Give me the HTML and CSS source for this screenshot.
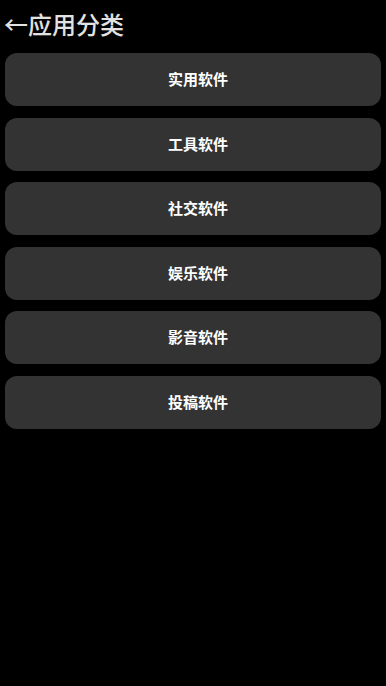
FILE: index.html
```html
<!DOCTYPE html>
<html lang="zh">
<head>
<meta charset="utf-8">
<link rel="stylesheet" href="styles.css">
</head>
<body>
<div class="page">
  <h1 class="title">←应用分类</h1>
  <div class="list">
    <div class="item">实用软件</div>
    <div class="item">工具软件</div>
    <div class="item">社交软件</div>
    <div class="item">娱乐软件</div>
    <div class="item">影音软件</div>
    <div class="item">投稿软件</div>
  </div>
</div>
</body>
</html>
```
FILE: styles.css
```css
html, body {
  margin: 0;
  padding: 0;
  background: #000;
  height: 100%;
}
body {
  font-family: "Noto Sans CJK SC", "Noto Sans", sans-serif;
  color: #fff;
}
.page {
  padding: 0 5px;
}
.title {
  margin: 0 0 0 -1px;
  padding-top: 6px;
  height: 42px;
  box-sizing: border-box;
  font-size: 24px;
  line-height: 36px;
  font-weight: 500;
  color: #e2e2e2;
}
.list {
  display: flex;
  flex-direction: column;
  gap: 11.5px;
  padding-top: 11px;
}
.item {
  height: 53px;
  border-radius: 12px;
  background: #333333;
  display: flex;
  align-items: center;
  justify-content: center;
  padding-left: 10px;
  padding-bottom: 2px;
  box-sizing: border-box;
  font-size: 15px;
  font-weight: 700;
  color: #fff;
}
```
